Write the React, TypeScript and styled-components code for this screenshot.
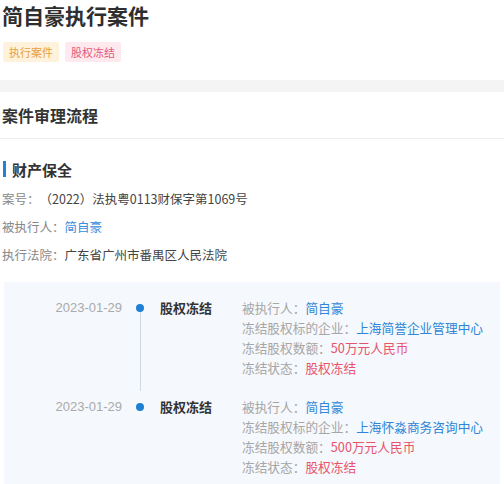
import React from "react";
import styled, { createGlobalStyle } from "styled-components";

const GlobalStyle = createGlobalStyle`
  body {
    margin: 0;
    background: #ffffff;
    font-family: "Noto Sans CJK SC", "Noto Sans", sans-serif;
  }
`;

type Tone = "orange" | "pink";
type ValueTone = "blue" | "red" | "plain";

const TAGS: { text: string; tone: Tone }[] = [
  { text: "执行案件", tone: "orange" },
  { text: "股权冻结", tone: "pink" },
];

const EVENTS = [
  {
    id: 1,
    date: "2023-01-29",
    title: "股权冻结",
    rows: [
      { label: "被执行人：", value: "简自豪", tone: "blue" as ValueTone },
      { label: "冻结股权标的企业：", value: "上海简誉企业管理中心", tone: "blue" as ValueTone },
      { label: "冻结股权数额：", value: "50万元人民币", tone: "red" as ValueTone },
      { label: "冻结状态：", value: "股权冻结", tone: "red" as ValueTone },
    ],
  },
  {
    id: 2,
    date: "2023-01-29",
    title: "股权冻结",
    rows: [
      { label: "被执行人：", value: "简自豪", tone: "blue" as ValueTone },
      { label: "冻结股权标的企业：", value: "上海怀淼商务咨询中心", tone: "blue" as ValueTone },
      { label: "冻结股权数额：", value: "500万元人民币", tone: "red" as ValueTone },
      { label: "冻结状态：", value: "股权冻结", tone: "red" as ValueTone },
    ],
  },
];

function App() {
  return (
    <>
      <GlobalStyle />
      <Page>
        <Header>
          <Title>简自豪执行案件</Title>
          <TagRow>
            {TAGS.map((tag) => (
              <Tag key={tag.text} $tone={tag.tone}>
                {tag.text}
              </Tag>
            ))}
          </TagRow>
        </Header>
        <Band />
        <SectionTitle>案件审理流程</SectionTitle>
        <Block>
          <BlockTitle>财产保全</BlockTitle>
          <InfoRow>
            <InfoLabel>案号：</InfoLabel>
            <InfoValue $tone="plain">（2022）法执粤0113财保字第1069号</InfoValue>
          </InfoRow>
          <InfoRow>
            <InfoLabel>被执行人：</InfoLabel>
            <InfoValue $tone="blue">简自豪</InfoValue>
          </InfoRow>
          <InfoRow>
            <InfoLabel>执行法院：</InfoLabel>
            <InfoValue $tone="plain">广东省广州市番禺区人民法院</InfoValue>
          </InfoRow>
        </Block>
        <Timeline>
          {EVENTS.map((event, i) => (
            <Event key={event.id} $last={i === EVENTS.length - 1}>
              <EventDate>{event.date}</EventDate>
              <Rail>
                <Dot />
                {i < EVENTS.length - 1 && <RailLine />}
              </Rail>
              <EventTitle>{event.title}</EventTitle>
              <Details>
                {event.rows.map((row) => (
                  <DetailLine key={row.label}>
                    <DetailLabel>{row.label}</DetailLabel>
                    <DetailValue $tone={row.tone}>{row.value}</DetailValue>
                  </DetailLine>
                ))}
              </Details>
            </Event>
          ))}
        </Timeline>
      </Page>
    </>
  );
}

export default App;

const Page = styled.div`
  width: 504px;
  height: 484px;
  overflow: hidden;
  background: #ffffff;
`;
const Header = styled.div`
  padding: 0 2px;
`;
const Title = styled.h1`
  margin: 0;
  height: 30px;
  line-height: 30px;
  font-size: 21px;
  font-weight: 700;
  color: #2e2e2e;
`;
const TagRow = styled.div`
  display: flex;
  gap: 6px;
  margin-top: 12px;
  padding-left: 1px;
`;
const Tag = styled.span<{ $tone: Tone }>`
  display: inline-flex;
  align-items: center;
  height: 20px;
  padding: 0 6px;
  border-radius: 2px;
  font-size: 11px;
  background: ${(p) => (p.$tone === "orange" ? "#fff2dc" : "#fde9ee")};
  color: ${(p) => (p.$tone === "orange" ? "#e7a03c" : "#e55b79")};
`;
const Band = styled.div`
  height: 12px;
  margin-top: 18px;
  background: #f4f4f4;
`;
const SectionTitle = styled.h2`
  margin: 0;
  height: 46px;
  line-height: 46px;
  padding-left: 2px;
  font-size: 16px;
  font-weight: 700;
  color: #333333;
  border-bottom: 1px solid #eeeeee;
`;
const Block = styled.div`
  padding: 19px 2px 0 2px;
`;
const BlockTitle = styled.h3`
  display: flex;
  align-items: center;
  gap: 6px;
  margin: 0 0 5px 0;
  height: 22px;
  font-size: 15px;
  font-weight: 700;
  color: #333333;
  &::before {
    content: "";
    width: 3px;
    height: 16px;
    margin-left: 1px;
    background: #2a7fd0;
  }
`;
const InfoRow = styled.div`
  display: flex;
  height: 28px;
  line-height: 28px;
  font-size: 12.5px;
`;
const InfoLabel = styled.span`
  color: #888888;
`;
const InfoValue = styled.span<{ $tone: ValueTone }>`
  color: ${(p) =>
    p.$tone === "blue" ? "#3a8ddb" : p.$tone === "red" ? "#e8536b" : "#444444"};
`;
const Timeline = styled.div`
  margin: 13px 4px 0 4px;
  padding-top: 16px;
  padding-bottom: 20px;
  background: #f5f8fc;
`;
const Event = styled.div<{ $last: boolean }>`
  display: grid;
  grid-template-columns: 118px 36px 84px 1fr;
  padding-bottom: ${(p) => (p.$last ? "0" : "19px")};
`;
const EventDate = styled.div`
  text-align: right;
  line-height: 20px;
  font-size: 13px;
  color: #aaaaaa;
  font-family: "Liberation Sans", "Noto Sans", sans-serif;
`;
const Rail = styled.div`
  display: flex;
  flex-direction: column;
  align-items: center;
  margin-bottom: -19px;
`;
const Dot = styled.div`
  width: 8px;
  height: 8px;
  margin-top: 6px;
  border-radius: 50%;
  background: #1f7fd3;
  flex-shrink: 0;
`;
const RailLine = styled.div`
  flex: 1;
  width: 1px;
  margin-bottom: 6px;
  background: #d2d8e0;
`;
const EventTitle = styled.div`
  padding-left: 2px;
  line-height: 20px;
  font-size: 13px;
  font-weight: 700;
  color: #333333;
`;
const Details = styled.div`
  display: flex;
  flex-direction: column;
`;
const DetailLine = styled.div`
  line-height: 20px;
  font-size: 12.7px;
  white-space: nowrap;
`;
const DetailLabel = styled.span`
  color: #a6a6a6;
`;
const DetailValue = styled.span<{ $tone: ValueTone }>`
  color: ${(p) =>
    p.$tone === "blue" ? "#2f86d8" : p.$tone === "red" ? "#e8536b" : "#444444"};
`;
